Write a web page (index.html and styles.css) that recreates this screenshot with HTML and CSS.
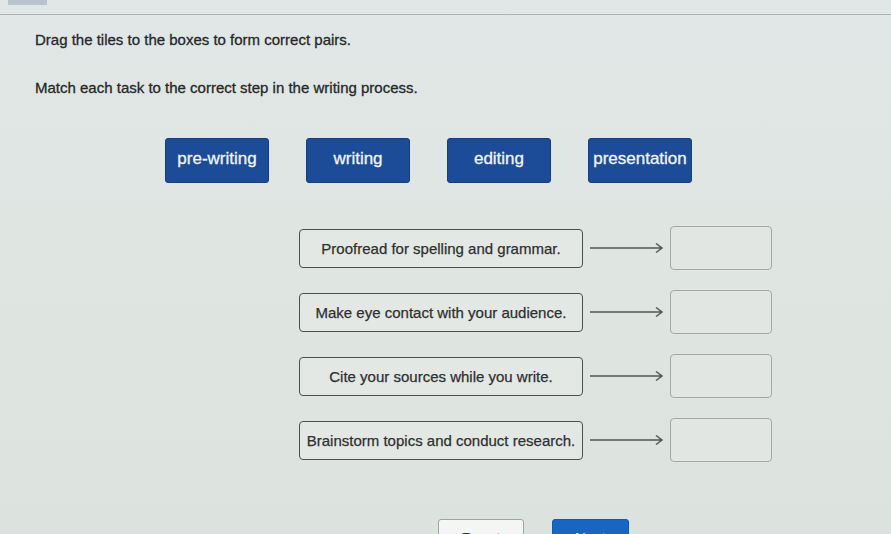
FILE: index.html
```html
<html>
<head>
<title>Drag the tiles</title>
<link rel="stylesheet" href="styles.css">
</head>
<body>
<div class="topbar"><span class="tab"></span></div>

<div class="prompt">
  <p class="first">Drag the tiles to the boxes to form correct pairs.</p>
  <p class="second">Match each task to the correct step in the writing process.</p>
</div>

<div class="tiles">
  <div class="tile">pre-writing</div>
  <div class="tile">writing</div>
  <div class="tile">editing</div>
  <div class="tile">presentation</div>
</div>

<div class="pairs">
  <div class="pair">
    <div class="task">Proofread for spelling and grammar.</div>
    <svg class="arrow" width="80" height="20" viewBox="0 0 80 20"><path d="M4 10H75M70 5.5L76 10L70 14.5" /></svg>
    <div class="target"></div>
  </div>
  <div class="pair">
    <div class="task">Make eye contact with your audience.</div>
    <svg class="arrow" width="80" height="20" viewBox="0 0 80 20"><path d="M4 10H75M70 5.5L76 10L70 14.5" /></svg>
    <div class="target"></div>
  </div>
  <div class="pair">
    <div class="task">Cite your sources while you write.</div>
    <svg class="arrow" width="80" height="20" viewBox="0 0 80 20"><path d="M4 10H75M70 5.5L76 10L70 14.5" /></svg>
    <div class="target"></div>
  </div>
  <div class="pair">
    <div class="task">Brainstorm topics and conduct research.</div>
    <svg class="arrow" width="80" height="20" viewBox="0 0 80 20"><path d="M4 10H75M70 5.5L76 10L70 14.5" /></svg>
    <div class="target"></div>
  </div>
</div>

<div class="actions">
  <button class="btn reset">Reset</button>
  <button class="btn next">Next</button>
</div>
</body>
</html>
```

FILE: styles.css
```css
BODY {margin:0;height:534px;overflow:hidden;font-family:"Liberation Sans",Arial,sans-serif;color:#262828;
  background:linear-gradient(180deg,#e0e7e6 0%,#dfe5e1 50%,#dce2de 100%);}

.topbar {height:14px;border-bottom:1px solid #adb5b3;}
.tab {display:block;width:39px;height:5px;margin-left:8px;background-color:#b7c5cb;}

.prompt {padding-left:35px;}
.prompt P {margin:0;font-size:15px;line-height:18px;-webkit-text-stroke:0.3px #262828;}
.prompt .first {margin-top:16px;}
.prompt .second {margin-top:30px;}

.tiles {display:flex;gap:37px;margin-top:41px;padding-left:165px;}
.tile {width:104px;height:45px;box-sizing:border-box;display:flex;align-items:center;justify-content:center;
  background-color:#1c4b97;border:1px solid #163d7c;border-radius:3px;color:#f2f5fa;font-size:17px;padding-bottom:3px;
  -webkit-text-stroke:0.3px #f2f5fa;}

.pairs {display:flex;flex-direction:column;gap:20px;margin-top:43px;padding-left:299px;}
.pair {display:flex;align-items:center;height:44px;}
.task {width:284px;height:39px;box-sizing:border-box;display:flex;align-items:center;justify-content:center;
  border:1.5px solid #4c4f4f;border-radius:4px;background-color:#e3e8e5;font-size:15px;color:#2e3030;
  -webkit-text-stroke:0.25px #2e3030;}
.arrow {margin-left:3px;}
.arrow PATH {fill:none;stroke:#505555;stroke-width:1.5;}
.target {width:102px;height:44px;box-sizing:border-box;margin-left:4px;
  border:1.5px solid #a2a9a7;border-radius:4px;background-color:#e1e6e3;}

.actions {display:flex;gap:28px;margin-top:57px;padding-left:438px;}
.btn {height:36px;border-radius:3px;font-family:"Liberation Sans",Arial,sans-serif;font-size:15px;padding:0;}
.reset {width:86px;background-color:#f4f6f5;border:1px solid #9ea4a3;color:#333;}
.next {width:77px;background-color:#1766c2;border:1px solid #1559a8;color:#fff;}
```
